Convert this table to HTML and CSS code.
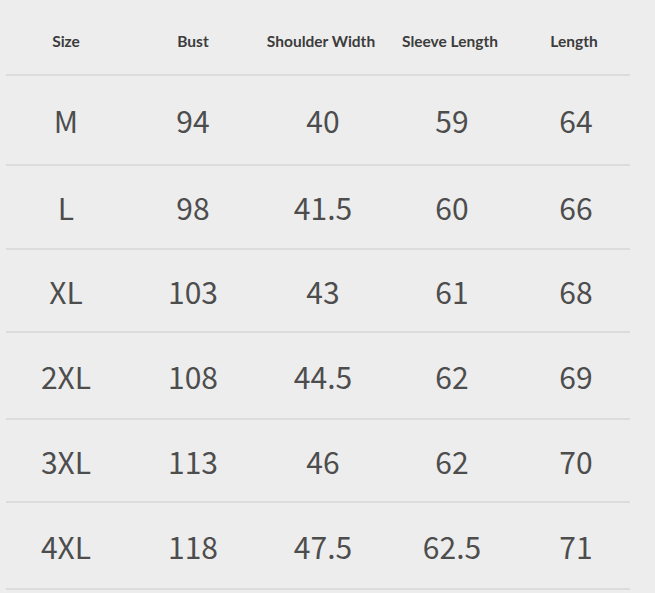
FILE: index.html
```html
<!DOCTYPE html>
<html>
<head>
<meta charset="utf-8">
<link rel="stylesheet" href="styles.css">
</head>
<body>
<div class="chart">
  <div class="row head">
    <div class="cell">Size</div>
    <div class="cell">Bust</div>
    <div class="cell">Shoulder Width</div>
    <div class="cell">Sleeve Length</div>
    <div class="cell">Length</div>
  </div>
  <div class="row data r1">
    <div class="cell">M</div><div class="cell">94</div><div class="cell">40</div><div class="cell">59</div><div class="cell">64</div>
  </div>
  <div class="row data r2">
    <div class="cell">L</div><div class="cell">98</div><div class="cell">41.5</div><div class="cell">60</div><div class="cell">66</div>
  </div>
  <div class="row data r3">
    <div class="cell">XL</div><div class="cell">103</div><div class="cell">43</div><div class="cell">61</div><div class="cell">68</div>
  </div>
  <div class="row data r4">
    <div class="cell">2XL</div><div class="cell">108</div><div class="cell">44.5</div><div class="cell">62</div><div class="cell">69</div>
  </div>
  <div class="row data r5">
    <div class="cell">3XL</div><div class="cell">113</div><div class="cell">46</div><div class="cell">62</div><div class="cell">70</div>
  </div>
  <div class="row data r6">
    <div class="cell">4XL</div><div class="cell">118</div><div class="cell">47.5</div><div class="cell">62.5</div><div class="cell">71</div>
  </div>
</div>
</body>
</html>
```
FILE: styles.css
```css
html, body {
  margin: 0;
  padding: 0;
  background: #ededed;
}
body {
  width: 655px;
  height: 593px;
  overflow: hidden;
}
.chart {
  margin-left: 6px;
  width: 624px;
  padding-top: 1px;
}
.row {
  display: grid;
  grid-template-columns: 120px 134px 122px 136px 112px;
  align-items: center;
  border-bottom: 2px solid #dcdcdc;
  font-family: "Noto Sans CJK SC", "Noto Sans", sans-serif;
  font-size: 30px;
  color: #4d4d4d;
}
.cell {
  text-align: center;
  white-space: nowrap;
}
.data .cell:nth-child(n+3) {
  padding-left: 4px;
}
.head {
  height: 75px;
  font-family: Lato, "Liberation Sans", sans-serif;
  font-weight: bold;
  font-size: 15.5px;
  color: #3c3c3c;
  padding-top: 6px;
  box-sizing: border-box;
}
.r1 { height: 88px; }
.r2 { height: 82px; }
.r3 { height: 81px; }
.r4 { height: 85px; }
.r5 { height: 81px; }
.r6 { height: 85px; }
```
